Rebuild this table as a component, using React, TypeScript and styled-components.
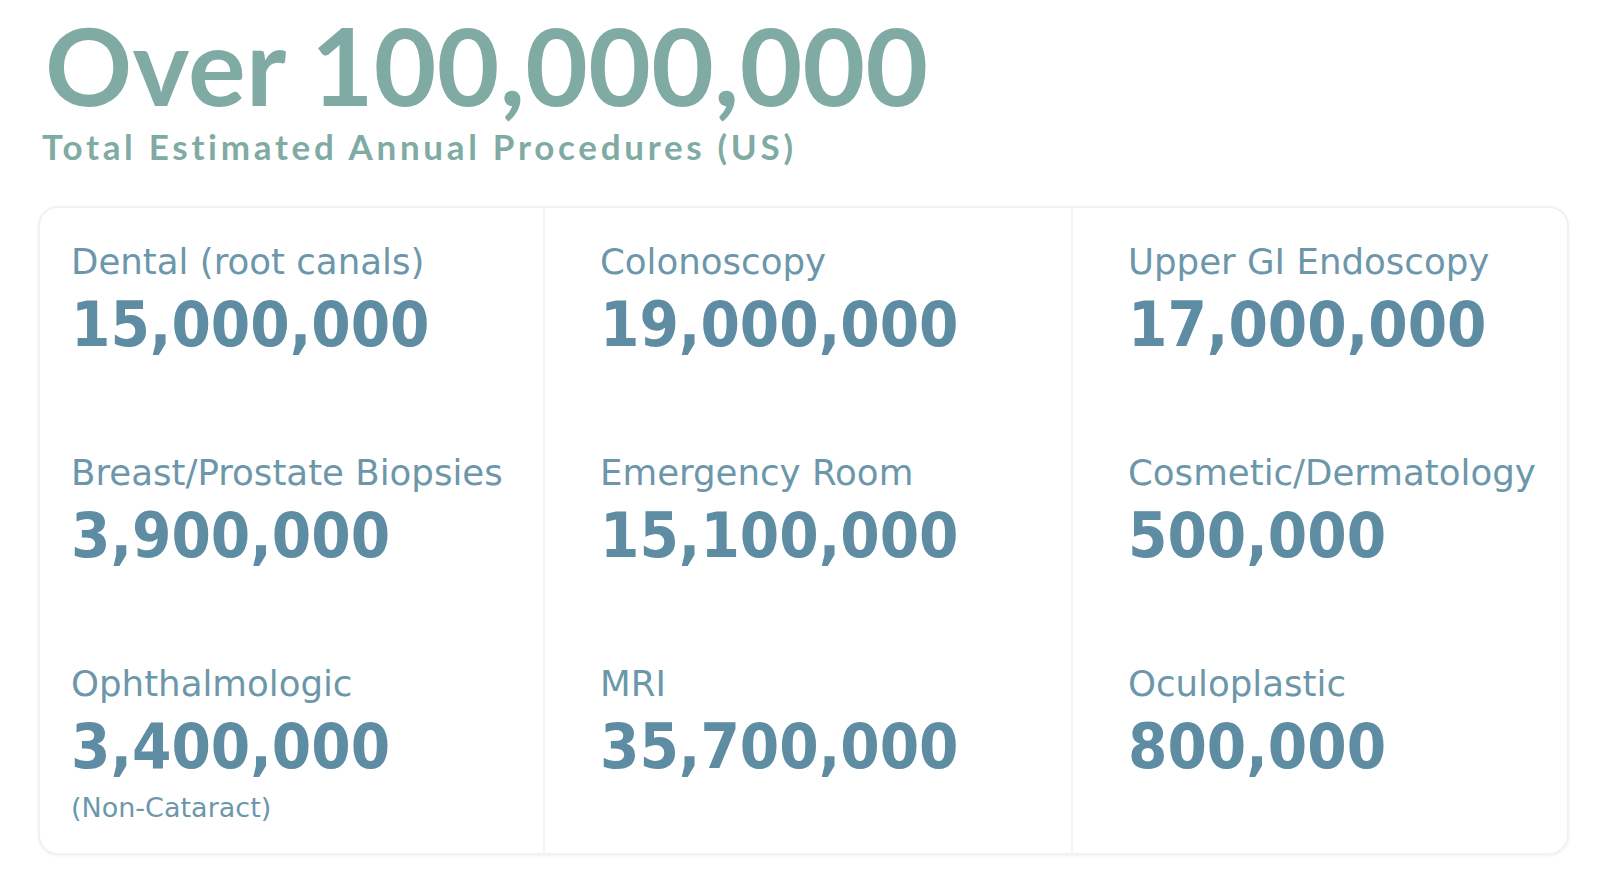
import React from "react";
import styled, { createGlobalStyle } from "styled-components";

interface Stat {
  label: string;
  value: string;
  note?: string;
}

const stats: Stat[] = [
  { label: "Dental (root canals)", value: "15,000,000" },
  { label: "Colonoscopy", value: "19,000,000" },
  { label: "Upper GI Endoscopy", value: "17,000,000" },
  { label: "Breast/Prostate Biopsies", value: "3,900,000" },
  { label: "Emergency Room", value: "15,100,000" },
  { label: "Cosmetic/Dermatology", value: "500,000" },
  { label: "Ophthalmologic", value: "3,400,000", note: "(Non-Cataract)" },
  { label: "MRI", value: "35,700,000" },
  { label: "Oculoplastic", value: "800,000" },
];

const GlobalStyle = createGlobalStyle`
  html, body {
    margin: 0;
    padding: 0;
    background: #ffffff;
  }
`;

const Page = styled.main`
  width: 1600px;
  height: 890px;
  box-sizing: border-box;
  padding: 12px 31px 0 38px;
  overflow: hidden;
`;

const Headline = styled.h1`
  margin: 0 0 0 7px;
  font-family: "Lato", "DejaVu Sans", sans-serif;
  font-weight: 700;
  font-size: 108px;
  line-height: 104px;
  letter-spacing: 0.3px;
  color: #80aba4;
`;

const Subline = styled.p`
  margin: 10px 0 0 4px;
  font-family: "Lato", "DejaVu Sans", sans-serif;
  font-weight: 700;
  font-size: 35px;
  line-height: 40px;
  letter-spacing: 3.7px;
  color: #80aba4;
`;

const Card = styled.section`
  margin-top: 40px;
  height: 649px;
  box-sizing: border-box;
  border: 2px solid #edf2f4;
  border-radius: 20px;
  box-shadow: 0 1px 3px rgba(120, 150, 165, 0.12);
  display: grid;
  grid-template-columns: 503px 528px 1fr;
  overflow: hidden;
`;

const Column = styled.div<{ $first?: boolean }>`
  display: grid;
  grid-template-rows: 211px 211px 1fr;
  padding: 34px 0 0 ${(p) => (p.$first ? 31 : 55)}px;
  border-left: ${(p) => (p.$first ? "none" : "2px solid #f0f4f6")};
`;

const Cell = styled.div`
  display: flex;
  flex-direction: column;
  white-space: nowrap;
`;

const Label = styled.div`
  font-family: "DejaVu Sans", sans-serif;
  font-size: 35.6px;
  line-height: 40px;
  color: #6c97ab;
`;

const Value = styled.div`
  margin-top: 8px;
  font-family: "DejaVu Sans Condensed", "DejaVu Sans", sans-serif;
  font-weight: 700;
  font-size: 63px;
  line-height: 70px;
  color: #5d8ca3;
`;

const Note = styled.div`
  margin-top: 10px;
  font-family: "DejaVu Sans", sans-serif;
  font-size: 27px;
  line-height: 32px;
  color: #6c97ab;
`;

export default function App() {
  const columns = [0, 1, 2].map((c) => stats.filter((_, i) => i % 3 === c));
  return (
    <>
      <GlobalStyle />
      <Page>
        <Headline>Over 100,000,000</Headline>
        <Subline>Total Estimated Annual Procedures (US)</Subline>
        <Card>
          {columns.map((col, ci) => (
            <Column key={ci} $first={ci === 0}>
              {col.map((s) => (
                <Cell key={s.label}>
                  <Label>{s.label}</Label>
                  <Value>{s.value}</Value>
                  {s.note && <Note>{s.note}</Note>}
                </Cell>
              ))}
            </Column>
          ))}
        </Card>
      </Page>
    </>
  );
}
